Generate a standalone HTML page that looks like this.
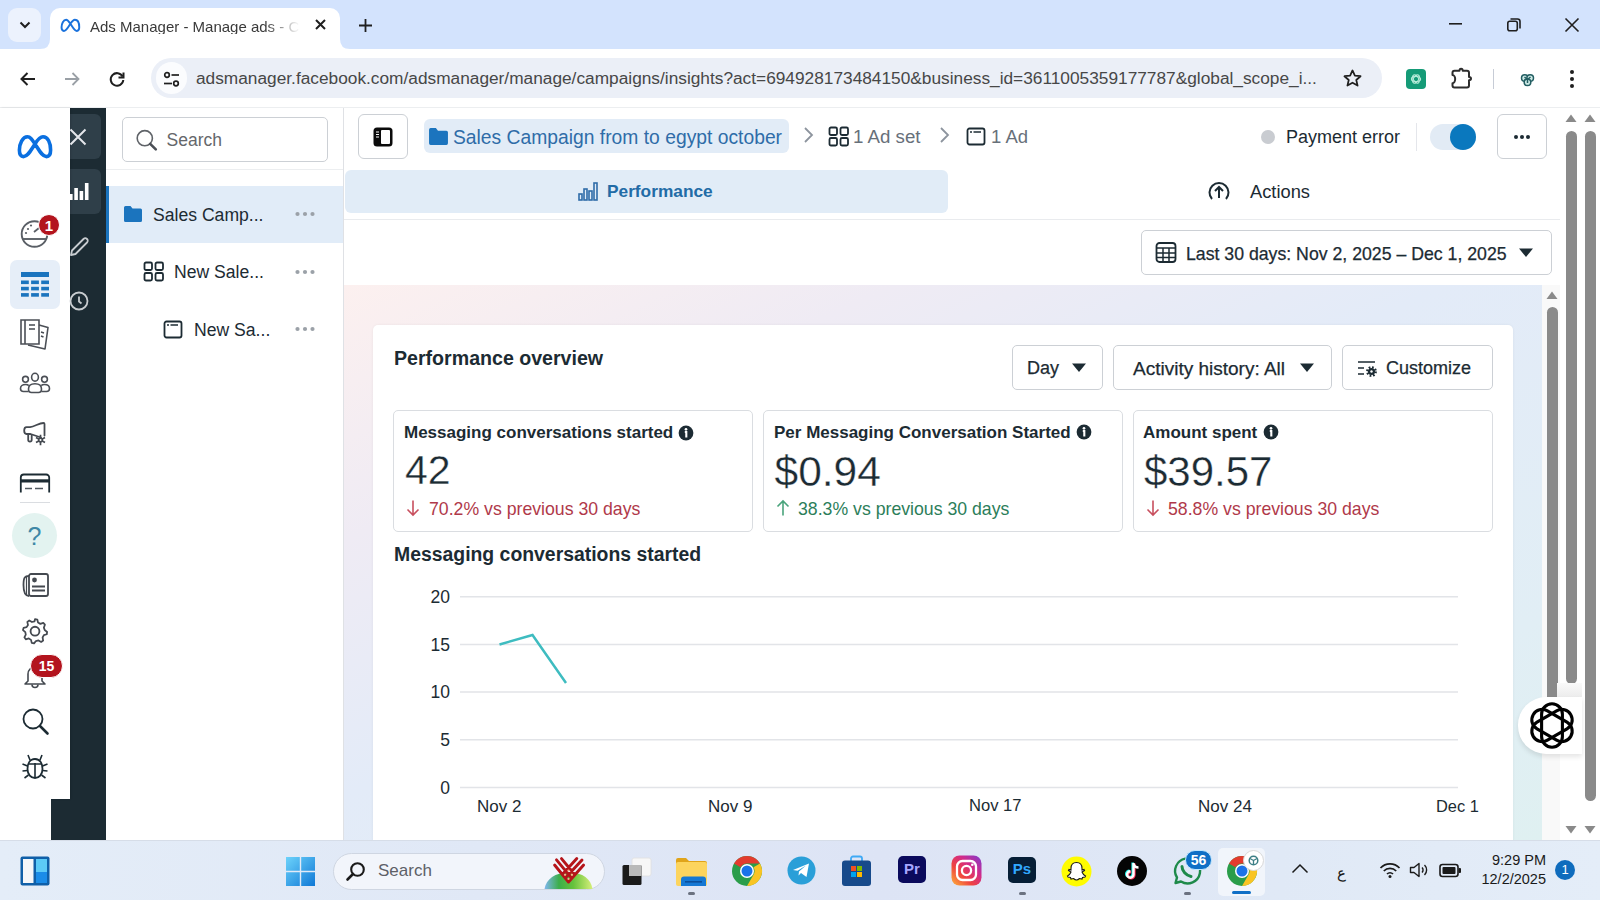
<!DOCTYPE html>
<html><head><meta charset="utf-8">
<style>
*{box-sizing:border-box;margin:0;padding:0}
html,body{width:1600px;height:900px;overflow:hidden;background:#fff;font-family:"Liberation Sans",sans-serif;color:#1c2b33}
.a{position:absolute}
svg{display:block;overflow:visible}
.t{position:absolute;white-space:nowrap;line-height:1}
</style></head><body>
<!-- ============ CHROME TAB STRIP ============ -->
<div class="a" style="left:0;top:0;width:1600px;height:49px;background:#d3e3fd"></div>
<div class="a" style="left:8px;top:8px;width:33px;height:34px;border-radius:9px;background:#ecf2fd"></div>
<svg class="a" style="left:18px;top:19.5px" width="14" height="10" viewBox="0 0 14 10"><path d="M2.5 2.5 L7 7 L11.5 2.5" fill="none" stroke="#1f1f1f" stroke-width="2"/></svg>
<!-- active tab -->
<div class="a" style="left:50px;top:8px;width:290px;height:42px;background:#fff;border-radius:10px 10px 0 0"></div>
<svg class="a" style="left:40px;top:39px" width="10" height="10"><path d="M0 10 Q10 10 10 0 V10Z" fill="#fff"/></svg>
<svg class="a" style="left:340px;top:39px" width="10" height="10"><path d="M10 10 Q0 10 0 0 V10Z" fill="#fff"/></svg>
<svg class="a" style="left:58.5px;top:16.5px" width="22.8" height="17" viewBox="0 0 40 30"><path d="M20 12 C22.5 8 25 4.8 28 4.8 C33 4.8 35.6 11 35.6 18 C35.6 22.5 34 24.6 31.5 24.6 C27 24.6 24 18 20 12 C17 7.5 15.5 4.8 12.5 4.8 C7.5 4.8 4.4 12 4.4 18 C4.4 22.5 6 24.6 8.5 24.6 C13 24.6 16 18 20 12 Z" fill="none" stroke="#1a72dc" stroke-width="3.4" stroke-linejoin="round"/></svg>
<div class="t" style="left:90px;top:18.5px;font-size:15px;color:#3a3a3a;width:210px;overflow:hidden;-webkit-mask-image:linear-gradient(90deg,#000 83%,transparent 100%)">Ads Manager - Manage ads - Campaigns</div>
<svg class="a" style="left:314px;top:18px" width="13" height="13" viewBox="0 0 13 13"><path d="M2 2L11 11M11 2L2 11" stroke="#1f1f1f" stroke-width="2"/></svg>
<svg class="a" style="left:358px;top:18px" width="15" height="15" viewBox="0 0 15 15"><path d="M7.5 1V14M1 7.5H14" stroke="#1f1f1f" stroke-width="1.8"/></svg>
<!-- window controls -->
<svg class="a" style="left:1449px;top:23px" width="14" height="3"><rect x="0" y="0" width="13" height="1.6" fill="#1f1f1f"/></svg>
<svg class="a" style="left:1506px;top:17px" width="16" height="16" viewBox="0 0 16 16"><rect x="1.8" y="4.2" width="9.5" height="9.5" rx="2" fill="none" stroke="#1f1f1f" stroke-width="1.6"/><path d="M4.5 2 H11.5 Q14 2 14 4.5 V11.5" fill="none" stroke="#1f1f1f" stroke-width="1.6"/></svg>
<svg class="a" style="left:1564px;top:17px" width="16" height="16" viewBox="0 0 16 16"><path d="M1.5 1.5L14.5 14.5M14.5 1.5L1.5 14.5" stroke="#1f1f1f" stroke-width="1.6"/></svg>

<!-- ============ TOOLBAR ============ -->
<div class="a" style="left:0;top:49px;width:1600px;height:60px;background:#fff;border-bottom:2px solid #eceef0"></div>
<svg class="a" style="left:19px;top:70px" width="18" height="18" viewBox="0 0 18 18"><path d="M16 9H2.5M8.5 3L2.5 9L8.5 15" fill="none" stroke="#1f1f1f" stroke-width="2"/></svg>
<svg class="a" style="left:63px;top:70px" width="18" height="18" viewBox="0 0 18 18"><path d="M2 9H15.5M9.5 3L15.5 9L9.5 15" fill="none" stroke="#9aa0a6" stroke-width="1.8"/></svg>
<svg class="a" style="left:108px;top:70px" width="18" height="18" viewBox="0 0 18 18"><path d="M14.6 6.5 A6.3 6.3 0 1 0 15.3 10" fill="none" stroke="#1f1f1f" stroke-width="2"/><path d="M15.5 2.5 V7.5 H10.5" fill="none" stroke="#1f1f1f" stroke-width="2"/></svg>
<div class="a" style="left:151px;top:58px;width:1231px;height:40px;border-radius:20px;background:#ebeff7"></div>
<div class="a" style="left:156px;top:62px;width:31px;height:32px;border-radius:16px;background:#fbfcfe"></div>
<svg class="a" style="left:162px;top:69.5px" width="20" height="20" viewBox="0 0 20 20"><circle cx="5" cy="5" r="2.3" fill="none" stroke="#1f1f1f" stroke-width="1.7"/><path d="M9.5 5H17" stroke="#1f1f1f" stroke-width="1.7"/><circle cx="14" cy="13.5" r="2.3" fill="none" stroke="#1f1f1f" stroke-width="1.7"/><path d="M2 13.5H10" stroke="#1f1f1f" stroke-width="1.7"/></svg>
<div class="t" style="left:196px;top:70px;font-size:17.3px;color:#474747">adsmanager.facebook.com/adsmanager/manage/campaigns/insights?act=694928173484150&amp;business_id=3611005359177787&amp;global_scope_i...</div>
<svg class="a" style="left:1342px;top:68px" width="21" height="21" viewBox="0 0 24 24"><path d="M12 2.8l2.7 6 6.5.6-4.9 4.3 1.5 6.4L12 16.8l-5.8 3.3 1.5-6.4-4.9-4.3 6.5-.6z" fill="none" stroke="#1f1f1f" stroke-width="2" stroke-linejoin="round"/></svg>
<div class="a" style="left:1405.5px;top:68.7px;width:20px;height:20px;border-radius:4px;background:#159b77"></div>
<svg class="a" style="left:1408.5px;top:71.7px" width="14" height="14" viewBox="0 0 14 14"><g fill="none" stroke="#b5ead8" stroke-width="1.1"><ellipse cx="7" cy="7" rx="4.6" ry="2.6"/><ellipse cx="7" cy="7" rx="4.6" ry="2.6" transform="rotate(60 7 7)"/><ellipse cx="7" cy="7" rx="4.6" ry="2.6" transform="rotate(120 7 7)"/></g></svg>
<svg class="a" style="left:1450px;top:66px" width="24" height="24" viewBox="0 0 24 24"><path d="M4.5 4.8 H9.5 A1.6 2 0 0 1 12.7 4.8 H17 Q19 4.8 19 6.8 V11 A2 1.6 0 0 1 19 14.2 V19.5 Q19 21.5 17 21.5 H4.5 Q2.5 21.5 2.5 19.5 V17.2 A2.6 4 0 0 0 2.5 9 V6.8 Q2.5 4.8 4.5 4.8Z" fill="none" stroke="#2d2d2d" stroke-width="2" stroke-linejoin="round"/></svg>
<div class="a" style="left:1493px;top:69px;width:1px;height:20px;background:#c7ccd6"></div>
<svg class="a" style="left:1519px;top:71px" width="17" height="17" viewBox="0 0 17 17"><g fill="#cdeae6" stroke="#235e62" stroke-width="1.5"><circle cx="5.8" cy="7" r="3.3"/><circle cx="11.2" cy="7" r="3.3"/><circle cx="8.5" cy="11.2" r="3.3"/></g><path d="M8.5 8.5 L5.5 6 M8.5 8.5 L11.5 6 M8.5 8.5 V12" stroke="#235e62" stroke-width="1.5"/></svg>
<svg class="a" style="left:1569px;top:69px" width="6" height="20" viewBox="0 0 6 20"><circle cx="3" cy="3" r="2" fill="#1f1f1f"/><circle cx="3" cy="10" r="2" fill="#1f1f1f"/><circle cx="3" cy="17" r="2" fill="#1f1f1f"/></svg>

<!-- ============ LEFT NAV ============ -->
<div class="a" style="left:51px;top:108px;width:55px;height:732px;background:#1c2b33"></div>
<div class="a" style="left:56px;top:114px;width:45px;height:45px;border-radius:6px;background:#2f3f49"></div>
<div class="a" style="left:56px;top:169px;width:45px;height:45px;border-radius:6px;background:#2f3f49"></div>
<div class="a" style="left:0;top:108px;width:70px;height:691px;background:#fff;box-shadow:1px 0 2px rgba(0,0,0,.12)"></div>
<div class="a" style="left:0;top:798px;width:51px;height:42px;background:#fff"></div>


<!-- nav icons -->
<svg class="a" style="left:15px;top:132px" width="40" height="30" viewBox="0 0 40 30"><path d="M20 12 C22.5 8 25 4.8 28 4.8 C33 4.8 35.6 11 35.6 18 C35.6 22.5 34 24.6 31.5 24.6 C27 24.6 24 18 20 12 C17 7.5 15.5 4.8 12.5 4.8 C7.5 4.8 4.4 12 4.4 18 C4.4 22.5 6 24.6 8.5 24.6 C13 24.6 16 18 20 12 Z" fill="none" stroke="#0a6fe0" stroke-width="3.6" stroke-linejoin="round"/></svg>
<!-- X in dark col -->
<svg class="a" style="left:69px;top:128px" width="18" height="18" viewBox="0 0 18 18"><path d="M1.5 1.5L16.5 16.5M16.5 1.5L1.5 16.5" stroke="#e4e6eb" stroke-width="2"/></svg>
<svg class="a" style="left:69px;top:182px" width="21" height="20" viewBox="0 0 21 20"><rect x="0" y="12" width="3.6" height="6" fill="#fff"/><rect x="5.3" y="6" width="3.6" height="12" fill="#fff"/><rect x="10.6" y="9" width="3.6" height="9" fill="#fff"/><rect x="15.9" y="1" width="3.6" height="17" fill="#fff"/></svg>
<svg class="a" style="left:68px;top:236px" width="22" height="22" viewBox="0 0 22 22"><path d="M3 19 L4 14.5 L15.5 3 A2 2 0 0 1 19 6.5 L7.5 18 Z" fill="none" stroke="#c8ccd0" stroke-width="1.8" stroke-linejoin="round"/></svg>
<svg class="a" style="left:67px;top:290px" width="22" height="22" viewBox="0 0 22 22"><circle cx="12" cy="11" r="8.5" fill="none" stroke="#c8ccd0" stroke-width="1.8"/><path d="M12 6.5V11.5L14.5 13.5" fill="none" stroke="#c8ccd0" stroke-width="1.8"/></svg>
<!-- gauge -->
<svg class="a" style="left:20px;top:219px" width="29" height="30" viewBox="0 0 29 30"><circle cx="14.5" cy="15" r="12.8" fill="none" stroke="#5a5f66" stroke-width="1.9"/><path d="M2 20 H27" stroke="#5a5f66" stroke-width="1.9"/><circle cx="8" cy="10" r="1.1" fill="#5a5f66"/><circle cx="11" cy="6.5" r="1.1" fill="#5a5f66"/><circle cx="6" cy="14" r="1.1" fill="#5a5f66"/><path d="M14 13 L19 9" stroke="#5a5f66" stroke-width="1.8"/></svg>
<div class="a" style="left:38px;top:214px;width:22px;height:22px;border-radius:11px;background:#b3141e;border:1px solid #fff"></div>
<div class="t" style="left:38px;top:217.5px;width:22px;text-align:center;font-size:15px;font-weight:700;color:#fff">1</div>
<!-- table active -->
<div class="a" style="left:10px;top:260px;width:50px;height:49px;border-radius:7px;background:#e6eef8"></div>
<svg class="a" style="left:21px;top:272px" width="28" height="25" viewBox="0 0 28 25"><rect x="0" y="0" width="28" height="5" fill="#1b74be"/><g fill="#1b74be"><rect x="0" y="8.5" width="7.8" height="3.6"/><rect x="10.1" y="8.5" width="7.8" height="3.6"/><rect x="20.2" y="8.5" width="7.8" height="3.6"/><rect x="0" y="14.8" width="7.8" height="3.6"/><rect x="10.1" y="14.8" width="7.8" height="3.6"/><rect x="20.2" y="14.8" width="7.8" height="3.6"/><rect x="0" y="21.1" width="7.8" height="3.6"/><rect x="10.1" y="21.1" width="7.8" height="3.6"/><rect x="20.2" y="21.1" width="7.8" height="3.6"/></g></svg>
<!-- pages -->
<svg class="a" style="left:19px;top:318px" width="32" height="33" viewBox="0 0 32 33"><path d="M2 2 H20 V26 H2 Z M6 2 V26" fill="none" stroke="#4b4f56" stroke-width="1.6"/><path d="M10 7 H16 M10 11 H16" stroke="#444950" stroke-width="1.6"/><path d="M20 7 L29 9.5 L26 31 L9 27" fill="none" stroke="#4b4f56" stroke-width="1.6" stroke-linejoin="round"/><path d="M22 14 L25 15 M22 18 L24.5 19" stroke="#444950" stroke-width="1.4"/></svg>
<!-- people -->
<svg class="a" style="left:19px;top:372px" width="32" height="22" viewBox="0 0 32 22"><g fill="none" stroke="#4b4f56" stroke-width="1.6"><ellipse cx="16" cy="5.2" rx="3.4" ry="3.9"/><circle cx="6.5" cy="7.3" r="2.9"/><circle cx="25.5" cy="7.3" r="2.9"/><path d="M9.5 17 C9.5 13.5 12 11.8 16 11.8 C20 11.8 22.5 13.5 22.5 17 C22.5 19.5 21.5 20.5 19.5 20.5 H12.5 C10.5 20.5 9.5 19.5 9.5 17Z"/><path d="M9.8 13.6 C9 12.8 8 12.5 6.5 12.5 C3.5 12.5 1.5 14 1.5 16.5 C1.5 18.5 2.5 19.5 4.5 19.5 H9.6 M22.2 13.6 C23 12.8 24 12.5 25.5 12.5 C28.5 12.5 30.5 14 30.5 16.5 C30.5 18.5 29.5 19.5 27.5 19.5 H22.4"/></g></svg>
<!-- megaphone -->
<svg class="a" style="left:22px;top:421px" width="28" height="26" viewBox="0 0 28 26"><path d="M8 6.2 H4.5 A2.3 3.4 0 0 0 4.5 13 H8.5 L19 16.5 M8 6.2 C13 5.5 17 2 21.5 2 A1 1 0 0 1 22.5 3 V14.5" fill="none" stroke="#444950" stroke-width="1.8" stroke-linejoin="round" stroke-linecap="round"/><path d="M6.2 13 V18.8 A1.75 1.75 0 0 0 9.7 18.8 V13.5" fill="none" stroke="#444950" stroke-width="1.8"/><g transform="translate(18.5 19)"><circle r="2.6" fill="#444950"/><path d="M0 -5.2 V5.2 M-4.5 -2.6 L4.5 2.6 M-4.5 2.6 L4.5 -2.6" stroke="#444950" stroke-width="1.7"/><circle r="1" fill="#fff"/></g></svg>
<!-- card -->
<svg class="a" style="left:19px;top:473px" width="32" height="21" viewBox="0 0 32 21"><path d="M1.8 19.5 V4.5 A3 3 0 0 1 4.8 1.5 H27.2 A3 3 0 0 1 30.2 4.5 V19.5" fill="none" stroke="#1c2b33" stroke-width="1.8"/><rect x="1" y="6.3" width="30" height="3.2" fill="#1c2b33"/><path d="M6 15.5 H13 M16 15.5 H24" stroke="#50585f" stroke-width="1.5"/></svg>
<div class="a" style="left:20px;top:502px;width:30px;height:1px;background:#dadde1"></div>
<!-- help -->
<div class="a" style="left:12px;top:513px;width:45px;height:45px;border-radius:50%;background:#e3f3f0"></div>
<div class="t" style="left:12px;top:524px;width:45px;text-align:center;font-size:25px;color:#3f88a6">?</div>
<!-- news -->
<svg class="a" style="left:21px;top:572px" width="29" height="27" viewBox="0 0 29 27"><rect x="8" y="2" width="19" height="22" rx="2" fill="none" stroke="#444950" stroke-width="1.8"/><path d="M8 4 C4 4 2.5 5 2.5 13 C2.5 21 4 24 8 24" fill="none" stroke="#444950" stroke-width="1.8"/><path d="M5.5 5 V23" stroke="#444950" stroke-width="1.2"/><circle cx="13.5" cy="8" r="2.4" fill="#444950"/><path d="M11 14.5 H24 M11 18.5 H24" stroke="#444950" stroke-width="1.8"/></svg>
<!-- gear -->
<svg class="a" style="left:21px;top:617px" width="28" height="28" viewBox="0 0 24 24"><path d="M12 1.8 L14 2.2 L14.6 4.8 L16.6 5.9 L19.1 5 L20.5 6.6 L19.6 9.1 L20.3 11.2 L22.4 12.8 L22.1 14.8 L19.6 15.6 L18.5 17.6 L19 20.2 L17.3 21.4 L15 20.1 L12.8 20.6 L11.2 22.6 L9.2 22.2 L8.6 19.6 L6.7 18.4 L4.1 19.1 L2.9 17.4 L4.1 15.1 L3.7 12.9 L1.7 11.2 L2.2 9.3 L4.8 8.7 L6 6.8 L5.4 4.2 L7.1 3 L9.4 4.3 L11.6 3.8 Z" fill="none" stroke="#444950" stroke-width="1.5" stroke-linejoin="round"/><circle cx="12" cy="12.2" r="3.8" fill="none" stroke="#444950" stroke-width="1.6"/></svg>
<!-- bell -->
<svg class="a" style="left:22px;top:662px" width="26" height="28" viewBox="0 0 26 28"><path d="M6 19 V12 A7 7 0 0 1 20 12 V19 L23 22 H3 Z" fill="none" stroke="#444950" stroke-width="1.6" stroke-linejoin="round"/><path d="M10 22.5 A3 3 0 0 0 16 22.5" fill="none" stroke="#444950" stroke-width="1.6"/></svg>
<div class="a" style="left:30px;top:654px;width:33px;height:24px;border-radius:12px;background:#b3141e;border:1px solid #fff"></div>
<div class="t" style="left:30px;top:659px;width:33px;text-align:center;font-size:14px;font-weight:700;color:#fff">15</div>
<!-- search -->
<svg class="a" style="left:21px;top:707px" width="29" height="29" viewBox="0 0 29 29"><circle cx="12" cy="12" r="9.5" fill="none" stroke="#1c2b33" stroke-width="1.8"/><path d="M19 19 L26.5 26.5" stroke="#1c2b33" stroke-width="2.6" stroke-linecap="round"/></svg>
<!-- bug -->
<svg class="a" style="left:21px;top:753px" width="28" height="27" viewBox="0 0 28 27"><path d="M14 6 C8.5 6 6.5 11 6.5 16 C6.5 21.5 10 25 14 25 C18 25 21.5 21.5 21.5 16 C21.5 11 19.5 6 14 6 Z" fill="none" stroke="#1c2b33" stroke-width="1.8"/><path d="M14 10 V25 M7 11 H21" stroke="#1c2b33" stroke-width="1.6"/><path d="M9 7 L7 2 M19 7 L21 2 M6.5 13 L1.5 11 M21.5 13 L26.5 11 M6.5 17.5 L1.5 18 M21.5 17.5 L26.5 18 M7.5 22 L3.5 25 M20.5 22 L24.5 25" stroke="#1c2b33" stroke-width="1.6"/></svg>

<!-- ============ TREE PANEL ============ -->
<div class="a" style="left:106px;top:108px;width:238px;height:732px;background:#fff;border-right:1px solid #dfe1e5"></div>


<div class="a" style="left:122px;top:117px;width:206px;height:45px;border:1px solid #ccd0d5;border-radius:5px;background:#fff"></div>
<svg class="a" style="left:135px;top:129px" width="23" height="22" viewBox="0 0 23 22"><circle cx="9.8" cy="9.2" r="7.6" fill="none" stroke="#5f6368" stroke-width="1.6"/><path d="M15.2 14.8 L20.8 20.4" stroke="#4b4f56" stroke-width="2.6" stroke-linecap="round"/></svg>
<div class="t" style="left:166.5px;top:131.8px;font-size:17.5px;color:#65676b">Search</div>
<div class="a" style="left:106px;top:169px;width:237px;height:1px;background:#eceef0"></div>
<div class="a" style="left:106px;top:186px;width:237px;height:57px;background:#e1ecf8"></div>
<div class="a" style="left:106px;top:186px;width:3px;height:57px;background:#1b74be"></div>
<svg class="a" style="left:123px;top:205px" width="20" height="18" viewBox="0 0 20 18"><path d="M1 2.5 A1.5 1.5 0 0 1 2.5 1 H7.5 L9.5 3.5 H17.5 A1.5 1.5 0 0 1 19 5 V15.5 A1.5 1.5 0 0 1 17.5 17 H2.5 A1.5 1.5 0 0 1 1 15.5 Z" fill="#1b74be"/></svg>
<div class="t" style="left:153px;top:206.5px;font-size:17.6px;color:#1c2b33">Sales Camp...</div>
<svg class="a" style="left:294px;top:211px" width="22" height="6"><circle cx="3.5" cy="3" r="2.1" fill="#9ba1a8"/><circle cx="11" cy="3" r="2.1" fill="#9ba1a8"/><circle cx="18.5" cy="3" r="2.1" fill="#9ba1a8"/></svg>
<svg class="a" style="left:142.5px;top:261px" width="22" height="21" viewBox="0 0 22 21"><rect x="1.5" y="1.5" width="7.5" height="7.5" rx="1.5" fill="none" stroke="#1c2b33" stroke-width="1.8"/><rect x="12.5" y="1.5" width="7.5" height="7.5" rx="1.5" fill="none" stroke="#1c2b33" stroke-width="1.8"/><rect x="1.5" y="12" width="7.5" height="7.5" rx="1.5" fill="none" stroke="#1c2b33" stroke-width="1.8"/><rect x="12.5" y="12" width="7.5" height="7.5" rx="1.5" fill="none" stroke="#1c2b33" stroke-width="1.8"/></svg>
<div class="t" style="left:174px;top:264.3px;font-size:17.6px;color:#1c2b33">New Sale...</div>
<svg class="a" style="left:294px;top:269px" width="22" height="6"><circle cx="3.5" cy="3" r="2.1" fill="#9ba1a8"/><circle cx="11" cy="3" r="2.1" fill="#9ba1a8"/><circle cx="18.5" cy="3" r="2.1" fill="#9ba1a8"/></svg>
<svg class="a" style="left:163px;top:320px" width="20" height="19" viewBox="0 0 20 19"><rect x="1.5" y="1.5" width="17" height="16" rx="2" fill="none" stroke="#1c2b33" stroke-width="1.8"/><circle cx="5" cy="5" r="1" fill="#1c2b33"/><path d="M7.5 5 H15" stroke="#1c2b33" stroke-width="1.5"/></svg>
<div class="t" style="left:194px;top:321.5px;font-size:17.6px;color:#1c2b33">New Sa...</div>
<svg class="a" style="left:294px;top:326px" width="22" height="6"><circle cx="3.5" cy="3" r="2.1" fill="#9ba1a8"/><circle cx="11" cy="3" r="2.1" fill="#9ba1a8"/><circle cx="18.5" cy="3" r="2.1" fill="#9ba1a8"/></svg>

<!-- ============ MAIN ============ -->
<div class="a" style="left:344px;top:108px;width:1256px;height:732px;background:#fff"></div>
<!-- header -->
<div class="a" style="left:358px;top:114px;width:50px;height:45px;border:1px solid #ccd0d5;border-radius:6px;background:#fff"></div>
<svg class="a" style="left:372px;top:126px" width="22" height="22" viewBox="0 0 22 22"><rect x="1.5" y="1.5" width="19" height="19" rx="3.5" fill="#0b0b0b"/><rect x="9" y="4" width="9" height="14" rx="1" fill="#fff"/><path d="M4 6 H7 M4 8.5 H7 M4 11 H7" stroke="#fff" stroke-width="1.1"/></svg>
<div class="a" style="left:424px;top:119px;width:365px;height:34px;border-radius:6px;background:#e2ecf7"></div>
<svg class="a" style="left:428px;top:127px" width="21" height="19" viewBox="0 0 20 18"><path d="M1 2.5 A1.5 1.5 0 0 1 2.5 1 H7.5 L9.5 3.5 H17.5 A1.5 1.5 0 0 1 19 5 V15.5 A1.5 1.5 0 0 1 17.5 17 H2.5 A1.5 1.5 0 0 1 1 15.5 Z" fill="#1b74be"/></svg>
<div class="t" style="left:453px;top:128px;font-size:19.3px;color:#2f6ca8">Sales Campaign from to egypt october</div>
<svg class="a" style="left:802px;top:126px" width="12" height="18" viewBox="0 0 12 18"><path d="M3 2 L10 9 L3 16" fill="none" stroke="#8d949e" stroke-width="1.8"/></svg>
<svg class="a" style="left:828px;top:126px" width="22" height="21" viewBox="0 0 22 21"><rect x="1.5" y="1.5" width="7.5" height="7.5" rx="1.5" fill="none" stroke="#1c2b33" stroke-width="1.8"/><rect x="12.5" y="1.5" width="7.5" height="7.5" rx="1.5" fill="none" stroke="#1c2b33" stroke-width="1.8"/><rect x="1.5" y="12" width="7.5" height="7.5" rx="1.5" fill="none" stroke="#1c2b33" stroke-width="1.8"/><rect x="12.5" y="12" width="7.5" height="7.5" rx="1.5" fill="none" stroke="#1c2b33" stroke-width="1.8"/></svg>
<div class="t" style="left:853px;top:128px;font-size:18.7px;color:#67707a">1 Ad set</div>
<svg class="a" style="left:938px;top:126px" width="12" height="18" viewBox="0 0 12 18"><path d="M3 2 L10 9 L3 16" fill="none" stroke="#8d949e" stroke-width="1.8"/></svg>
<svg class="a" style="left:966px;top:127px" width="20" height="19" viewBox="0 0 20 19"><rect x="1.5" y="1.5" width="17" height="16" rx="2" fill="none" stroke="#1c2b33" stroke-width="1.8"/><circle cx="5" cy="5" r="1" fill="#1c2b33"/><path d="M7.5 5 H15" stroke="#1c2b33" stroke-width="1.5"/></svg>
<div class="t" style="left:991px;top:128px;font-size:18.5px;color:#67707a">1 Ad</div>
<div class="a" style="left:1261px;top:130px;width:14px;height:14px;border-radius:50%;background:#c9ccd1"></div>
<div class="t" style="left:1286px;top:128px;font-size:18px;color:#1c2b33">Payment error</div>
<div class="a" style="left:1416px;top:123px;width:1px;height:28px;background:#e4e6eb"></div>
<div class="a" style="left:1430px;top:124px;width:46px;height:26px;border-radius:13px;background:#e2ebf5"></div>
<div class="a" style="left:1450px;top:124px;width:26px;height:26px;border-radius:50%;background:#0a78be"></div>
<div class="a" style="left:1497px;top:114px;width:50px;height:45px;border:1px solid #ccd0d5;border-radius:6px;background:#fff"></div>
<svg class="a" style="left:1513px;top:134px" width="18" height="6"><circle cx="3" cy="3" r="2" fill="#1c2b33"/><circle cx="9" cy="3" r="2" fill="#1c2b33"/><circle cx="15" cy="3" r="2" fill="#1c2b33"/></svg>
<!-- tabs -->
<div class="a" style="left:345px;top:170px;width:603px;height:43px;border-radius:6px;background:#e1ecf7"></div>
<svg class="a" style="left:578px;top:182px" width="21" height="19" viewBox="0 0 21 19"><g fill="none" stroke="#2f6ca8" stroke-width="1.6"><rect x="1" y="12" width="3" height="6"/><rect x="6" y="7" width="3" height="11"/><rect x="11" y="9" width="3" height="9"/><rect x="16" y="1" width="3" height="17"/></g></svg>
<div class="t" style="left:607px;top:183px;font-size:17.3px;font-weight:700;color:#226ba6">Performance</div>
<svg class="a" style="left:1207px;top:181px" width="24" height="22" viewBox="0 0 24 22"><path d="M5 18 A9.5 9.5 0 1 1 19 18" fill="none" stroke="#1c2b33" stroke-width="2"/><path d="M12 17 V6 M8 10 L12 6 L16 10" fill="none" stroke="#1c2b33" stroke-width="2"/></svg>
<div class="t" style="left:1250px;top:183px;font-size:18.3px;color:#1c2b33">Actions</div>
<div class="a" style="left:344px;top:219px;width:1216px;height:1px;background:#e9ebee"></div>
<!-- date -->
<div class="a" style="left:1141px;top:230px;width:411px;height:45px;border:1px solid #ccd0d5;border-radius:5px;background:#fff"></div>
<svg class="a" style="left:1155px;top:241px" width="22" height="23" viewBox="0 0 22 23"><rect x="1.5" y="2" width="19" height="19" rx="3" fill="none" stroke="#1c2b33" stroke-width="1.8"/><path d="M1.5 7 H20.5 M1.5 12 H20.5 M1.5 16.5 H20.5 M8 7 V21 M14 7 V21" stroke="#1c2b33" stroke-width="1.5"/></svg>
<div class="t" style="left:1186px;top:245.5px;font-size:17.7px;color:#1c2b33;-webkit-text-stroke:.25px #1c2b33">Last 30 days: Nov 2, 2025 – Dec 1, 2025</div>
<svg class="a" style="left:1518px;top:247px" width="16" height="11" viewBox="0 0 16 11"><path d="M1 1.5 H15 L8 10 Z" fill="#1c2b33"/></svg>



<!-- gradient + card -->
<div class="a" style="left:344px;top:285px;width:1198px;height:555px;background:linear-gradient(to bottom right,#fcf0ef 0%,#efebf4 23%,#e3ebf8 46%,#e1eef5 80%,#dff0f1 100%)"></div>
<div class="a" style="left:373px;top:325px;width:1140px;height:520px;background:#fff;border-radius:5px;box-shadow:0 0 3px rgba(0,0,0,.06)"></div>
<div class="t" style="left:394px;top:349px;font-size:19.6px;font-weight:700;color:#1c2b33">Performance overview</div>
<!-- buttons -->
<div class="a" style="left:1012px;top:345px;width:91px;height:45px;border:1px solid #ccd0d5;border-radius:5px"></div>
<div class="t" style="left:1027px;top:359px;font-size:18px;color:#1c2b33;-webkit-text-stroke:.25px #1c2b33">Day</div>
<svg class="a" style="left:1071px;top:362px" width="16" height="11" viewBox="0 0 16 11"><path d="M1 1.5 H15 L8 10 Z" fill="#1c2b33"/></svg>
<div class="a" style="left:1113px;top:345px;width:219px;height:45px;border:1px solid #ccd0d5;border-radius:5px"></div>
<div class="t" style="left:1133px;top:359px;font-size:19px;color:#1c2b33;-webkit-text-stroke:.25px #1c2b33">Activity history: All</div>
<svg class="a" style="left:1299px;top:362px" width="16" height="11" viewBox="0 0 16 11"><path d="M1 1.5 H15 L8 10 Z" fill="#1c2b33"/></svg>
<div class="a" style="left:1342px;top:345px;width:151px;height:45px;border:1px solid #ccd0d5;border-radius:5px"></div>
<svg class="a" style="left:1356px;top:359px" width="23" height="19" viewBox="0 0 23 19"><path d="M2 3 H19 M2 9 H8 M2 15 H8" stroke="#1c2b33" stroke-width="1.7"/><circle cx="15.5" cy="12.5" r="4.3" fill="none" stroke="#1c2b33" stroke-width="2.2" stroke-dasharray="1.7 1.68"/><circle cx="15.5" cy="12.5" r="3.6" fill="#1c2b33"/><circle cx="15.5" cy="12.5" r="1.2" fill="#fff"/></svg>
<div class="t" style="left:1386px;top:359px;font-size:18px;color:#1c2b33;-webkit-text-stroke:.25px #1c2b33">Customize</div>
<!-- metric boxes -->
<div class="a" style="left:393px;top:410px;width:360px;height:122px;border:1px solid #dadde1;border-radius:5px"></div>
<div class="a" style="left:763px;top:410px;width:360px;height:122px;border:1px solid #dadde1;border-radius:5px"></div>
<div class="a" style="left:1133px;top:410px;width:360px;height:122px;border:1px solid #dadde1;border-radius:5px"></div>
<div class="t" style="left:404px;top:424px;font-size:17px;font-weight:700;color:#1c2b33">Messaging conversations started</div>
<svg class="a" style="left:678.3px;top:424.7px" width="16" height="16" viewBox="0 0 16 16"><circle cx="8" cy="8" r="7.4" fill="#1c2b33"/><circle cx="8" cy="4.3" r="1.35" fill="#fff"/><path d="M6.8 7 H8.3 V12.6" stroke="#fff" stroke-width="2.1" fill="none"/></svg>
<div class="t" style="left:405px;top:450px;font-size:41px;color:#1c2b33;-webkit-text-stroke:.35px #fff">42</div>
<svg class="a" style="left:405px;top:499px" width="16" height="18" viewBox="0 0 16 18"><path d="M8 1.5 V16 M2.5 10.5 L8 16 L13.5 10.5" fill="none" stroke="#c84f5e" stroke-width="1.6"/></svg>
<div class="t" style="left:429px;top:501px;font-size:17.7px;color:#b0394a">70.2% vs previous 30 days</div>

<div class="t" style="left:774px;top:424px;font-size:17px;font-weight:700;color:#1c2b33">Per Messaging Conversation Started</div>
<svg class="a" style="left:1076px;top:424px" width="16" height="16" viewBox="0 0 16 16"><circle cx="8" cy="8" r="7.4" fill="#1c2b33"/><circle cx="8" cy="4.3" r="1.35" fill="#fff"/><path d="M6.8 7 H8.3 V12.6" stroke="#fff" stroke-width="2.1" fill="none"/></svg>
<div class="t" style="left:774.5px;top:450.5px;font-size:42.5px;color:#1c2b33;-webkit-text-stroke:.35px #fff">$0.94</div>
<svg class="a" style="left:775px;top:499px" width="16" height="18" viewBox="0 0 16 18"><path d="M8 16.5 V2 M2.5 7.5 L8 2 L13.5 7.5" fill="none" stroke="#4aa47c" stroke-width="1.6"/></svg>
<div class="t" style="left:798px;top:501px;font-size:17.7px;color:#2c7e5a">38.3% vs previous 30 days</div>

<div class="t" style="left:1143px;top:424px;font-size:17px;font-weight:700;color:#1c2b33">Amount spent</div>
<svg class="a" style="left:1263px;top:424px" width="16" height="16" viewBox="0 0 16 16"><circle cx="8" cy="8" r="7.4" fill="#1c2b33"/><circle cx="8" cy="4.3" r="1.35" fill="#fff"/><path d="M6.8 7 H8.3 V12.6" stroke="#fff" stroke-width="2.1" fill="none"/></svg>
<div class="t" style="left:1144px;top:450.5px;font-size:42px;color:#1c2b33;-webkit-text-stroke:.35px #fff">$39.57</div>
<svg class="a" style="left:1145px;top:499px" width="16" height="18" viewBox="0 0 16 18"><path d="M8 1.5 V16 M2.5 10.5 L8 16 L13.5 10.5" fill="none" stroke="#c84f5e" stroke-width="1.6"/></svg>
<div class="t" style="left:1168px;top:501px;font-size:17.7px;color:#b0394a">58.8% vs previous 30 days</div>

<!-- chart -->
<div class="t" style="left:394px;top:545px;font-size:19.4px;font-weight:700;color:#1c2b33">Messaging conversations started</div>
<svg class="a" style="left:0;top:0" width="1600" height="900">
<g stroke="#e2e4e8" stroke-width="1.5"><path d="M460 596.7H1458M460 644.4H1458M460 692H1458M460 739.7H1458M460 787.5H1458"/></g>
<path d="M499.5 644.5 L532.5 635 L566 683" fill="none" stroke="#3ebcc0" stroke-width="2.5"/>
</svg>
<div class="t" style="left:400px;top:589px;width:50px;text-align:right;font-size:17.5px;color:#1c2b33">20</div>
<div class="t" style="left:400px;top:637px;width:50px;text-align:right;font-size:17.5px;color:#1c2b33">15</div>
<div class="t" style="left:400px;top:684px;width:50px;text-align:right;font-size:17.5px;color:#1c2b33">10</div>
<div class="t" style="left:400px;top:732px;width:50px;text-align:right;font-size:17.5px;color:#1c2b33">5</div>
<div class="t" style="left:400px;top:780px;width:50px;text-align:right;font-size:17.5px;color:#1c2b33">0</div>
<div class="t" style="left:477px;top:798px;font-size:17px;color:#1c2b33">Nov 2</div>
<div class="t" style="left:708px;top:798px;font-size:17px;color:#1c2b33">Nov 9</div>
<div class="t" style="left:969px;top:798px;font-size:16.6px;color:#1c2b33">Nov 17</div>
<div class="t" style="left:1198px;top:798px;font-size:17px;color:#1c2b33">Nov 24</div>
<div class="t" style="left:1436px;top:798px;font-size:16.4px;color:#1c2b33">Dec 1</div>

<!-- scrollbars -->
<div class="a" style="left:1542px;top:285px;width:18px;height:555px;background:#f9f9f9"></div>
<div class="a" style="left:1560px;top:108px;width:40px;height:732px;background:#fff"></div>
<svg class="a" style="left:1545px;top:289px" width="14" height="12"><path d="M1.5 10 L7 2.5 L12.5 10Z" fill="#8a8a8a"/></svg>
<div class="a" style="left:1547px;top:307px;width:11px;height:400px;border-radius:6px 6px 0 0;background:#8a8a8a"></div>
<svg class="a" style="left:1564px;top:112px" width="14" height="12"><path d="M1.5 10 L7 2.5 L12.5 10Z" fill="#8a8a8a"/></svg>
<svg class="a" style="left:1583px;top:112px" width="14" height="12"><path d="M1.5 10 L7 2.5 L12.5 10Z" fill="#8a8a8a"/></svg>
<div class="a" style="left:1566px;top:131px;width:11px;height:553px;border-radius:6px;background:#8a8a8a"></div>
<svg class="a" style="left:1564px;top:824px" width="14" height="12"><path d="M1.5 2 L7 9.5 L12.5 2Z" fill="#8a8a8a"/></svg>
<svg class="a" style="left:1583px;top:824px" width="14" height="12"><path d="M1.5 2 L7 9.5 L12.5 2Z" fill="#8a8a8a"/></svg>
<!-- chatgpt float -->
<div class="a" style="left:1557px;top:683px;width:25px;height:14px;background:linear-gradient(#fafafa,#ececec)"></div>
<div class="a" style="left:1518px;top:697px;width:64px;height:57px;border-radius:28px 0 0 28px;background:#fff;box-shadow:0 3px 5px rgba(0,0,0,.10)"></div>
<svg class="a" style="left:1530px;top:702px" width="45" height="47" viewBox="0 0 45 47"><g fill="none" stroke="#000" stroke-width="3.1"><rect x="11.6" y="1.8" width="20.8" height="43.4" rx="10.4"/><rect x="11.6" y="1.8" width="20.8" height="43.4" rx="10.4" transform="rotate(60 22 23.5)"/><rect x="11.6" y="1.8" width="20.8" height="43.4" rx="10.4" transform="rotate(120 22 23.5)"/></g></svg>
<div class="a" style="left:1585px;top:131px;width:11px;height:670px;border-radius:6px;background:#8a8a8a"></div>

<!-- ============ TASKBAR ============ -->
<div class="a" style="left:0;top:840px;width:1600px;height:60px;background:linear-gradient(90deg,#e4edf8 0%,#e0e8f6 30%,#dde4f5 55%,#e0e9f6 80%,#e4edf8 100%);border-top:1px solid #d6dde8"></div>
<!-- widgets -->
<svg class="a" style="left:19px;top:855px" width="32" height="32" viewBox="0 0 32 32"><rect x="1.5" y="1.5" width="29" height="29" rx="2" fill="#0f5fa8"/><rect x="4" y="4" width="10.5" height="24" fill="#f4f6f9"/><rect x="17" y="4" width="11" height="13" fill="#5ccaf7"/><rect x="17" y="17" width="11" height="11" fill="#1b8ce8"/></svg>
<!-- windows logo -->
<svg class="a" style="left:286px;top:857px" width="29" height="29" viewBox="0 0 29 29"><defs><linearGradient id="wg" x1="0" y1="0" x2="1" y2="1"><stop offset="0" stop-color="#6dd3fb"/><stop offset="1" stop-color="#0f78d6"/></linearGradient></defs><path d="M0 0H13.8V13.8H0Z M15.2 0H29V13.8H15.2Z M0 15.2H13.8V29H0Z M15.2 15.2H29V29H15.2Z" fill="url(#wg)"/></svg>
<!-- search pill -->
<div class="a" style="left:333px;top:853px;width:272px;height:37px;border-radius:19px;background:#f2f5fb;border:1px solid #cfd6e2"></div>
<svg class="a" style="left:345px;top:861px" width="22" height="21" viewBox="0 0 22 21"><circle cx="12.5" cy="8.5" r="6.3" fill="none" stroke="#1a1a1a" stroke-width="2.1"/><path d="M8 13 L2.5 18.5" stroke="#1a1a1a" stroke-width="2.6" stroke-linecap="round"/></svg>
<div class="t" style="left:378px;top:862px;font-size:17px;color:#5d6067">Search</div>
<svg class="a" style="left:543px;top:856px" width="56" height="34" viewBox="0 0 56 34"><defs><linearGradient id="gl" x1="0" y1="0" x2="1" y2="0"><stop offset="0" stop-color="#7fb6f0"/><stop offset=".3" stop-color="#3cae4a"/><stop offset=".6" stop-color="#66c23c"/><stop offset="1" stop-color="#d6ef7a"/></linearGradient></defs><path d="M1.5 33 C3 23 12 16.5 26 16.5 C40 16.5 48 23 49.5 33 Z" fill="url(#gl)"/><g stroke="#b5141a" stroke-width="2.9" stroke-linecap="round"><path d="M11.6 9 L25.5 26 M13.5 3.8 L28.2 21.6 M18.5 2.6 L30.8 17.5 M40.6 9 L25.5 26 M39 4 L22.8 21.6 M33.8 2.6 L20.2 17.5"/></g><g fill="#f7b08a"><circle cx="25.5" cy="14.5" r="1.1"/><circle cx="22" cy="18.8" r="1.1"/><circle cx="29" cy="18.8" r="1.1"/><circle cx="25.5" cy="23" r="1.1"/></g></svg>
<!-- task view -->
<svg class="a" style="left:621px;top:856px" width="32" height="30" viewBox="0 0 32 30"><rect x="11" y="2" width="19" height="18" rx="2" fill="#f7f7f7" stroke="#e0e0e0" stroke-width=".8"/><rect x="1.5" y="9" width="19" height="20" rx="1.5" fill="#1a1a1a"/><rect x="8" y="9" width="12.5" height="11" fill="#b9b9b9"/></svg>
<!-- explorer -->
<svg class="a" style="left:675px;top:856px" width="33" height="31" viewBox="0 0 33 31"><path d="M1 4 A2 2 0 0 1 3 2 H11 L14 5 H30 A2 2 0 0 1 32 7 V8 H1Z" fill="#e0a41a"/><rect x="1" y="6" width="31" height="24" rx="2" fill="#fcd45e"/><path d="M6 30 V23.5 A3 3 0 0 1 9 20.5 H28 A3 3 0 0 1 31 23.5 V30Z" fill="#1578d4"/><rect x="10" y="25" width="17" height="1.6" fill="#0b4e9a"/></svg>
<div class="a" style="left:688px;top:892px;width:7px;height:3px;border-radius:2px;background:#6b7280"></div>
<!-- chrome -->
<svg class="a" style="left:731px;top:855px" width="32" height="32" viewBox="0 0 32 32"><circle cx="16" cy="16" r="15" fill="#2a9d4a"/><path d="M16 1 A15 15 0 0 1 29 8.5 L16 8.5 A7.5 7.5 0 0 0 9.5 12.3 L3 8.5 A15 15 0 0 1 16 1Z" fill="#e33b2e"/><path d="M29 8.5 A15 15 0 0 1 16 31 L22.5 19.75 A7.5 7.5 0 0 0 22.5 12.25Z" fill="#f9c423"/><circle cx="16" cy="16" r="7" fill="#fff"/><circle cx="16" cy="16" r="5.5" fill="#1a73e8"/></svg>
<!-- telegram -->
<svg class="a" style="left:787px;top:856px" width="29" height="29" viewBox="0 0 29 29"><circle cx="14.5" cy="14.5" r="14" fill="#2a9fd8"/><path d="M6 14 L22 7.5 L19.5 21 L14 17 L11.5 19.5 L12 15.5 L19 9.5 L10.5 14.8Z" fill="#fff"/></svg>
<!-- store -->
<svg class="a" style="left:841px;top:855px" width="31" height="32" viewBox="0 0 31 32"><path d="M10 6 V3.5 A2 2 0 0 1 12 1.5 H19 A2 2 0 0 1 21 3.5 V6" fill="none" stroke="#3fa9f5" stroke-width="1.8"/><rect x="1" y="5.5" width="29" height="25.5" rx="3" fill="#174a8b"/><rect x="10" y="11" width="5" height="5" fill="#f25022"/><rect x="16" y="11" width="5" height="5" fill="#7fba00"/><rect x="10" y="17" width="5" height="5" fill="#00a4ef"/><rect x="16" y="17" width="5" height="5" fill="#ffb900"/></svg>
<!-- Pr -->
<div class="a" style="left:898px;top:856px;width:28px;height:27px;border-radius:5px;background:#0a0a5c"></div>
<div class="t" style="left:898px;top:861px;width:28px;text-align:center;font-size:15px;font-weight:700;color:#a6a6ff">Pr</div>
<!-- instagram -->
<svg class="a" style="left:951px;top:855px" width="31" height="31" viewBox="0 0 31 31"><defs><linearGradient id="ig" x1="0" y1="1" x2="1" y2="0"><stop offset="0" stop-color="#fdb43b"/><stop offset=".35" stop-color="#f0443e"/><stop offset=".65" stop-color="#d12b8a"/><stop offset="1" stop-color="#7e3bd0"/></linearGradient></defs><rect x="0.5" y="0.5" width="30" height="30" rx="8" fill="url(#ig)"/><rect x="6" y="6" width="19" height="19" rx="5.5" fill="none" stroke="#fff" stroke-width="2.3"/><circle cx="15.5" cy="15.5" r="4.6" fill="none" stroke="#fff" stroke-width="2.3"/><circle cx="21.3" cy="9.7" r="1.3" fill="#fff"/></svg>
<!-- Ps -->
<div class="a" style="left:1008px;top:857px;width:28px;height:26px;border-radius:5px;background:#061e36"></div>
<div class="t" style="left:1008px;top:861px;width:28px;text-align:center;font-size:15px;font-weight:700;color:#31a8ff">Ps</div>
<div class="a" style="left:1019px;top:892px;width:7px;height:3px;border-radius:2px;background:#6b7280"></div>
<!-- snapchat -->
<svg class="a" style="left:1061px;top:856px" width="31" height="31" viewBox="0 0 31 31"><circle cx="15.5" cy="15.5" r="15" fill="#fffc00"/><path d="M15.5 6.5 C11.5 6.5 10 9.5 10 12.5 V14 L8 13.5 L7.5 14.5 L10 16 C9 18.5 7.5 19.5 6.5 20 L7 21 L9.5 21.5 L10 23 L12.5 22.5 C13.5 23.5 14.5 24 15.5 24 C16.5 24 17.5 23.5 18.5 22.5 L21 23 L21.5 21.5 L24 21 L24.5 20 C23.5 19.5 22 18.5 21 16 L23.5 14.5 L23 13.5 L21 14 V12.5 C21 9.5 19.5 6.5 15.5 6.5Z" fill="#fff" stroke="#1a1a1a" stroke-width="1.1"/></svg>
<!-- tiktok -->
<svg class="a" style="left:1117px;top:856px" width="30" height="30" viewBox="0 0 30 30"><circle cx="15" cy="15" r="15" fill="#050505"/><path d="M16.5 7 V18.5 A3.2 3.2 0 1 1 13.3 15.3" fill="none" stroke="#25f4ee" stroke-width="2.6" transform="translate(-.8 -.6)"/><path d="M16.5 7 V18.5 A3.2 3.2 0 1 1 13.3 15.3" fill="none" stroke="#fe2c55" stroke-width="2.6" transform="translate(.8 .6)"/><path d="M16.5 7 V18.5 A3.2 3.2 0 1 1 13.3 15.3 M16.5 7.5 C17 10 19 11.5 21.5 11.5" fill="none" stroke="#fff" stroke-width="2.4"/></svg>
<!-- whatsapp -->
<svg class="a" style="left:1171px;top:856px" width="31" height="31" viewBox="0 0 31 31"><path d="M4.5 27 L6 21.5 A12.5 12.5 0 1 1 10 25.5 Z" fill="none" stroke="#1e8a4a" stroke-width="2.4" stroke-linejoin="round"/><path d="M11 10.5 C11 15 15 19.5 20 20.5" fill="none" stroke="#1e8a4a" stroke-width="3" stroke-linecap="round"/></svg>
<div class="a" style="left:1185px;top:850px;width:27px;height:20px;border-radius:10px;background:#0f6fc6;border:1px solid #bfe6ff"></div>
<div class="t" style="left:1185px;top:853px;width:27px;text-align:center;font-size:14px;font-weight:700;color:#fff">56</div>
<div class="a" style="left:1184px;top:892px;width:7px;height:3px;border-radius:2px;background:#6b7280"></div>
<!-- chrome active -->
<div class="a" style="left:1218px;top:848px;width:47px;height:48px;border-radius:5px;background:rgba(255,255,255,.55)"></div>
<svg class="a" style="left:1226px;top:855px" width="32" height="32" viewBox="0 0 32 32"><circle cx="16" cy="16" r="15" fill="#2a9d4a"/><path d="M16 1 A15 15 0 0 1 29 8.5 L16 8.5 A7.5 7.5 0 0 0 9.5 12.3 L3 8.5 A15 15 0 0 1 16 1Z" fill="#e33b2e"/><path d="M29 8.5 A15 15 0 0 1 16 31 L22.5 19.75 A7.5 7.5 0 0 0 22.5 12.25Z" fill="#f9c423"/><circle cx="16" cy="16" r="7" fill="#fff"/><circle cx="16" cy="16" r="5.5" fill="#1a73e8"/></svg>
<div class="a" style="left:1243px;top:850px;width:21px;height:21px;border-radius:50%;background:#fff;border:1px solid #d8d8d8"></div>
<svg class="a" style="left:1248px;top:855px" width="11" height="11" viewBox="0 0 11 11"><circle cx="5.5" cy="5.5" r="4.3" fill="none" stroke="#3d7f86" stroke-width="1.5"/><path d="M5.5 5.5L2 3.5M5.5 5.5L9 3.5M5.5 5.5V10" stroke="#3d7f86" stroke-width="1.3"/></svg>
<div class="a" style="left:1232px;top:891px;width:19px;height:3px;border-radius:2px;background:#0f6fc6"></div>
<!-- tray -->
<svg class="a" style="left:1291px;top:863px" width="18" height="11" viewBox="0 0 18 11"><path d="M1.5 9.5 L9 2 L16.5 9.5" fill="none" stroke="#1a1a1a" stroke-width="1.5"/></svg>
<div class="t" style="left:1337px;top:865px;font-size:15px;color:#1a1a1a">ع</div>
<svg class="a" style="left:1379px;top:862px" width="22" height="16" viewBox="0 0 22 16"><path d="M1.5 6 A13 13 0 0 1 20.5 6" fill="none" stroke="#1a1a1a" stroke-width="1.7"/><path d="M4.8 9 A8.5 8.5 0 0 1 17.2 9" fill="none" stroke="#1a1a1a" stroke-width="1.7"/><path d="M8 12 A4.2 4.2 0 0 1 14 12" fill="none" stroke="#1a1a1a" stroke-width="1.7"/><circle cx="11" cy="14.5" r="1.5" fill="#1a1a1a"/></svg>
<svg class="a" style="left:1409px;top:862px" width="21" height="16" viewBox="0 0 21 16"><path d="M1.5 5.5 H5 L10 1.5 V14.5 L5 10.5 H1.5Z" fill="none" stroke="#1a1a1a" stroke-width="1.4" stroke-linejoin="round"/><path d="M13 5.5 A3.5 3.5 0 0 1 13 10.5 M15.5 3 A7 7 0 0 1 15.5 13" fill="none" stroke="#1a1a1a" stroke-width="1.4"/></svg>
<svg class="a" style="left:1439px;top:863px" width="23" height="15" viewBox="0 0 23 15"><rect x="1" y="1.5" width="18" height="12" rx="2.5" fill="none" stroke="#1a1a1a" stroke-width="1.6"/><rect x="3.5" y="4" width="13" height="7" rx="1" fill="#1a1a1a"/><rect x="19.5" y="5" width="2.5" height="5" rx="1" fill="#1a1a1a"/></svg>
<div class="t" style="left:1440px;top:853px;width:106px;text-align:right;font-size:14.5px;color:#1a1a1a">9:29 PM</div>
<div class="t" style="left:1440px;top:872px;width:106px;text-align:right;font-size:14.5px;color:#1a1a1a">12/2/2025</div>
<div class="a" style="left:1555px;top:860px;width:20px;height:20px;border-radius:50%;background:#0f6cbd"></div>
<div class="t" style="left:1555px;top:863px;width:20px;text-align:center;font-size:13px;color:#fff">1</div>
</body></html>
